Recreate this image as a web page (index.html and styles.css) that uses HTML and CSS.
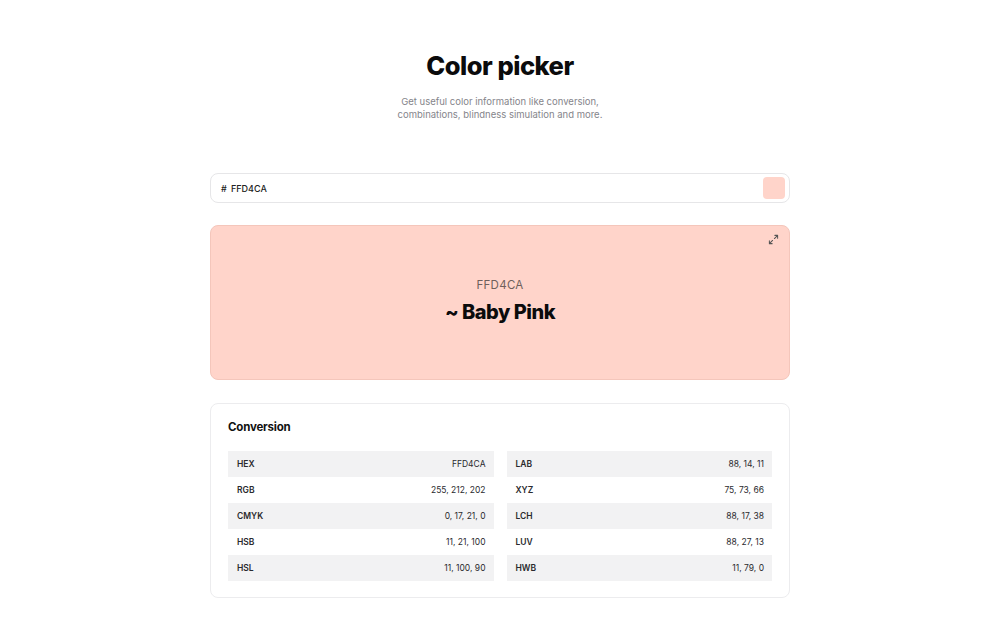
FILE: index.html
```html
<!DOCTYPE html>
<html>
<head>
<meta charset="utf-8">
<link rel="stylesheet" href="styles.css">
</head>
<body>
<main class="page">
  <h1 class="title">Color picker</h1>
  <p class="subtitle">Get useful color information like conversion,<br>combinations, blindness simulation and more.</p>

  <div class="input">
    <span class="hash">#</span>
    <span class="hex">FFD4CA</span>
    <span class="swatch"></span>
  </div>

  <section class="preview">
    <svg class="expand" viewBox="0 0 12 12" width="11" height="11" fill="none" stroke="#555" stroke-width="1.1" stroke-linecap="round" stroke-linejoin="round">
      <path d="M7.5 1.5h3v3M10.5 1.5L7 5M4.5 10.5h-3v-3M1.5 10.5L5 7"/>
    </svg>
    <div class="code">FFD4CA</div>
    <div class="name">~ Baby Pink</div>
  </section>

  <section class="card">
    <h2 class="card-title">Conversion</h2>
    <div class="tables">
      <div class="table">
        <div class="row"><span>HEX</span><span>FFD4CA</span></div>
        <div class="row"><span>RGB</span><span>255, 212, 202</span></div>
        <div class="row"><span>CMYK</span><span>0, 17, 21, 0</span></div>
        <div class="row"><span>HSB</span><span>11, 21, 100</span></div>
        <div class="row"><span>HSL</span><span>11, 100, 90</span></div>
      </div>
      <div class="table">
        <div class="row"><span>LAB</span><span>88, 14, 11</span></div>
        <div class="row"><span>XYZ</span><span>75, 73, 66</span></div>
        <div class="row"><span>LCH</span><span>88, 17, 38</span></div>
        <div class="row"><span>LUV</span><span>88, 27, 13</span></div>
        <div class="row"><span>HWB</span><span>11, 79, 0</span></div>
      </div>
    </div>
  </section>
</main>
</body>
</html>
```
FILE: styles.css
```css
* { box-sizing: border-box; }
html, body { margin: 0; padding: 0; background: #fff; }
body {
  font-family: Inter, "Noto Sans", "Liberation Sans", sans-serif;
  color: #111;
}
.page {
  width: 580px;
  margin: 0 auto;
  padding-top: 49px;
}
.title {
  margin: 0;
  text-align: center;
  font-size: 25.5px;
  line-height: 34px;
  font-weight: 800;
  letter-spacing: -0.5px;
  color: #0b0b0c;
}
.subtitle {
  margin: 12px 0 0;
  text-align: center;
  font-size: 9.5px;
  line-height: 13px;
  color: #85858b;
}
.input {
  margin-top: 52px;
  height: 30px;
  border: 1px solid #e6e6e8;
  border-radius: 8px;
  display: flex;
  align-items: center;
  padding: 0 4px 0 10px;
  font-size: 9px;
  font-weight: 500;
  color: #222;
}
.hash { width: 10px; }
.hex { flex: 1; }
.swatch {
  width: 22px;
  height: 22px;
  border-radius: 4px;
  background: #FFD4CA;
}
.preview {
  position: relative;
  margin-top: 22px;
  height: 155px;
  background: #FFD4CA;
  border: 1px solid #f4c6bb;
  border-radius: 8px;
  display: flex;
  flex-direction: column;
  align-items: center;
  justify-content: center;
  padding-bottom: 4px;
}
.expand {
  position: absolute;
  top: 8px;
  right: 10px;
}
.code {
  font-size: 11.5px;
  color: #6e5f5b;
  letter-spacing: 0.3px;
  line-height: 14px;
}
.name {
  margin-top: 8px;
  font-size: 20px;
  line-height: 24px;
  font-weight: 800;
  letter-spacing: -0.5px;
  color: #0b0b0c;
}
.card {
  margin-top: 23px;
  border: 1px solid #ececee;
  border-radius: 8px;
  padding: 16px 17px 16px;
}
.card-title {
  margin: 0;
  font-size: 11.5px;
  line-height: 14px;
  font-weight: 700;
  letter-spacing: -0.2px;
}
.tables {
  margin-top: 17px;
  display: grid;
  grid-template-columns: 1fr 1fr;
  column-gap: 13px;
}
.row {
  height: 26px;
  display: flex;
  align-items: center;
  justify-content: space-between;
  padding: 0 8px 0 9px;
  font-size: 8.5px;
  color: #2a2a2e;
}
.row span:first-child { font-weight: 600; }
.row:nth-child(odd) { background: #f2f2f3; }
```
